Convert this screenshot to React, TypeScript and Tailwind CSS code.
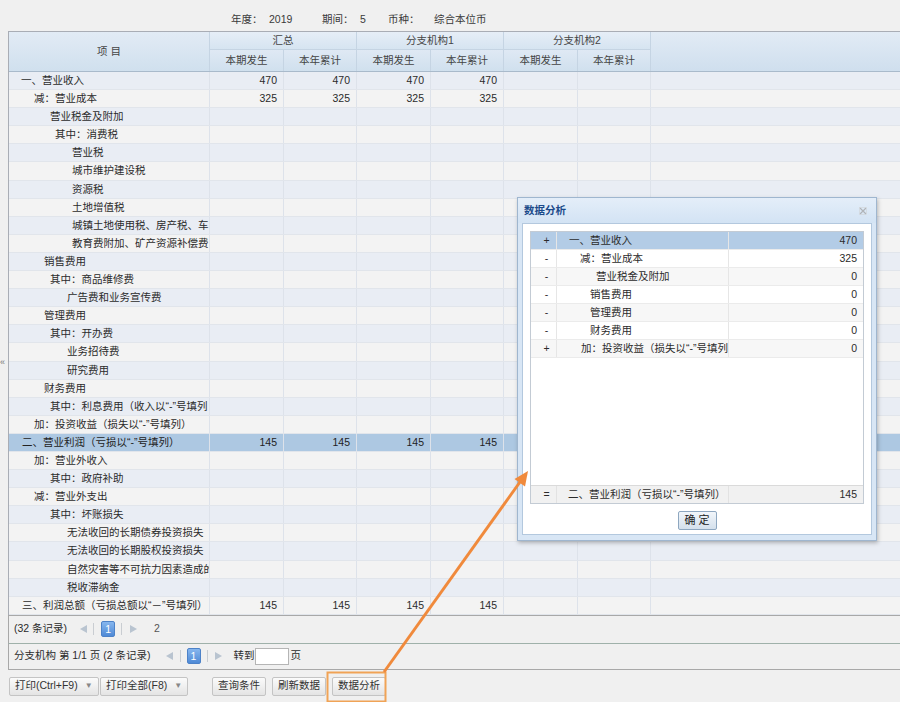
type Row = {
  name: string
  pad: string
  vals?: string[]
  sel?: boolean
}

const rows: Row[] = [
  { name: '一、营业收入', pad: 'pl-[12px]', vals: ['470', '470', '470', '470', '', ''] },
  { name: '减：营业成本', pad: 'pl-[25px]', vals: ['325', '325', '325', '325', '', ''] },
  { name: '营业税金及附加', pad: 'pl-[41px]' },
  { name: '其中：消费税', pad: 'pl-[46px]' },
  { name: '营业税', pad: 'pl-[63px]' },
  { name: '城市维护建设税', pad: 'pl-[63px]' },
  { name: '资源税', pad: 'pl-[63px]' },
  { name: '土地增值税', pad: 'pl-[63px]' },
  { name: '城镇土地使用税、房产税、车', pad: 'pl-[63px]' },
  { name: '教育费附加、矿产资源补偿费', pad: 'pl-[63px]' },
  { name: '销售费用', pad: 'pl-[35px]' },
  { name: '其中：商品维修费', pad: 'pl-[41px]' },
  { name: '广告费和业务宣传费', pad: 'pl-[58px]' },
  { name: '管理费用', pad: 'pl-[35px]' },
  { name: '其中：开办费', pad: 'pl-[41px]' },
  { name: '业务招待费', pad: 'pl-[58px]' },
  { name: '研究费用', pad: 'pl-[58px]' },
  { name: '财务费用', pad: 'pl-[35px]' },
  { name: '其中：利息费用（收入以“-”号填列', pad: 'pl-[41px]' },
  { name: '加：投资收益（损失以“-”号填列）', pad: 'pl-[25px]' },
  { name: '二、营业利润（亏损以“-”号填列）', pad: 'pl-[13px]', vals: ['145', '145', '145', '145', '', ''], sel: true },
  { name: '加：营业外收入', pad: 'pl-[25px]' },
  { name: '其中：政府补助', pad: 'pl-[41px]' },
  { name: '减：营业外支出', pad: 'pl-[25px]' },
  { name: '其中：坏账损失', pad: 'pl-[41px]' },
  { name: '无法收回的长期债券投资损失', pad: 'pl-[58px]' },
  { name: '无法收回的长期股权投资损失', pad: 'pl-[58px]' },
  { name: '自然灾害等不可抗力因素造成的', pad: 'pl-[58px]' },
  { name: '税收滞纳金', pad: 'pl-[58px]' },
  { name: '三、利润总额（亏损总额以“－”号填列）', pad: 'pl-[13px]', vals: ['145', '145', '145', '145', '', ''] },
]

const dlgRows = [
  { sign: '+', name: '一、营业收入', pad: 'pl-[12px]', val: '470' },
  { sign: '-', name: '减：营业成本', pad: 'pl-[23px]', val: '325' },
  { sign: '-', name: '营业税金及附加', pad: 'pl-[39px]', val: '0' },
  { sign: '-', name: '销售费用', pad: 'pl-[33px]', val: '0' },
  { sign: '-', name: '管理费用', pad: 'pl-[33px]', val: '0' },
  { sign: '-', name: '财务费用', pad: 'pl-[33px]', val: '0' },
  { sign: '+', name: '加：投资收益（损失以“-”号填列', pad: 'pl-[24px]', val: '0' },
]

const cols = 'grid grid-cols-[201px_74px_73px_74px_73px_74px_73px_1fr]'

function Prev() {
  return (
    <svg width="7" height="8" viewBox="0 0 7 8">
      <polygon points="7,0 7,8 0,4" fill="#b9c4d0" />
    </svg>
  )
}

function Next() {
  return (
    <svg width="7" height="8" viewBox="0 0 7 8">
      <polygon points="0,0 7,4 0,8" fill="#b9c4d0" />
    </svg>
  )
}

function Sep() {
  return <span className="w-px h-[12px] bg-[#c9cdd2]" />
}

function PageBox() {
  return (
    <span className="w-[14px] h-[16px] rounded-[2px] border border-[#4d82c8] bg-gradient-to-b from-[#86b6ee] to-[#4f8ad6] text-white text-center leading-[14px]">
      1
    </span>
  )
}

function Btn({ label, drop }: { label: string; drop?: boolean }) {
  return (
    <div className="h-[19px] px-[5px] flex items-center rounded-[2px] border border-[#c4c4c4] bg-gradient-to-b from-[#fbfbfb] to-[#e4e4e4] text-[#333] whitespace-nowrap">
      <span>{label}</span>
      {drop && <span className="ml-[7px] text-[8px] text-[#888]">▼</span>}
    </div>
  )
}

export default function App() {
  return (
    <div className="relative w-[900px] h-[702px] overflow-hidden bg-[#f0f0f0] text-[#2b2b2b] text-[10.5px] font-['Liberation_Sans','Noto_Sans_CJK_SC',sans-serif]">
      {/* query info */}
      <div className="h-[31px] pt-[8px] flex items-center text-[#3a3a3a]">
        <span className="ml-[231px] w-[38px]">年度：</span>
        <span className="w-[53px]">2019</span>
        <span className="w-[38px]">期间：</span>
        <span className="w-[28px]">5</span>
        <span className="w-[46px]">币种：</span>
        <span>综合本位币</span>
      </div>

      {/* report grid */}
      <div className="ml-[8px] border-l border-t border-[#a9adb5]">
        <div className={`${cols} grid-rows-[18px_21px] border-b border-[#a9bacb] text-[#444]`}>
          <div className="row-span-2 flex items-center justify-center border-r border-[#c5d4e3] bg-gradient-to-b from-[#e2ebf5] to-[#d0e0ee]">
            项 目
          </div>
          <div className="col-span-2 flex items-center justify-center border-r border-b border-[#c5d4e3] bg-gradient-to-b from-[#e6eef7] to-[#d6e4f1]">
            汇总
          </div>
          <div className="col-span-2 flex items-center justify-center border-r border-b border-[#c5d4e3] bg-gradient-to-b from-[#e6eef7] to-[#d6e4f1]">
            分支机构1
          </div>
          <div className="col-span-2 flex items-center justify-center border-r border-b border-[#c5d4e3] bg-gradient-to-b from-[#e6eef7] to-[#d6e4f1]">
            分支机构2
          </div>
          <div className="row-span-2 bg-gradient-to-b from-[#e2ebf5] to-[#cfdfee]" />
          {['本期发生', '本年累计', '本期发生', '本年累计', '本期发生', '本年累计'].map((t, i) => (
            <div
              key={i}
              className="flex items-center justify-center border-r border-[#c5d4e3] bg-gradient-to-b from-[#dfe9f4] to-[#d0e0ee]"
            >
              {t}
            </div>
          ))}
        </div>

        {rows.map((r, i) => {
          const bg = r.sel ? 'bg-[#adc8e2] text-[#222]' : i % 2 === 0 ? 'bg-[#e9edf4]' : 'bg-[#f3f3f3]'
          const vals = r.vals ?? ['', '', '', '', '', '']
          return (
            <div key={i} className={`${cols} h-[18.1px] border-b border-[#e1e5eb] leading-[17px] ${bg}`}>
              <div className={`${r.pad} border-r border-[#dde2ea] overflow-hidden whitespace-nowrap`}>{r.name}</div>
              {vals.map((v, j) => (
                <div key={j} className="border-r border-[#dde2ea] text-right pr-[6px]">
                  {v}
                </div>
              ))}
              <div />
            </div>
          )
        })}
      </div>

      {/* pager 1 */}
      <div className="ml-[8px] h-[28px] border-l border-t border-[#a8a8a8] flex items-center pl-[5px]">
        <span>(32 条记录)</span>
        <span className="ml-[13px]"><Prev /></span>
        <span className="ml-[6px] flex"><Sep /></span>
        <span className="ml-[7px] flex"><PageBox /></span>
        <span className="ml-[6px] flex"><Sep /></span>
        <span className="ml-[8px]"><Next /></span>
        <span className="ml-[17px] text-[#555]">2</span>
      </div>

      {/* pager 2 */}
      <div className="ml-[8px] h-[27px] border-l border-t border-b border-t-[#9fb1aa] border-b-[#a8a8a8] border-l-[#a8a8a8] flex items-center pl-[5px]">
        <span className="whitespace-nowrap">分支机构 第 1/1 页 (2 条记录)</span>
        <span className="ml-[15px]"><Prev /></span>
        <span className="ml-[7px] flex"><Sep /></span>
        <span className="ml-[6px] flex"><PageBox /></span>
        <span className="ml-[6px] flex"><Sep /></span>
        <span className="ml-[7px]"><Next /></span>
        <span className="ml-[12px]">转到</span>
        <span className="w-[34px] h-[17px] bg-white border border-[#b5b5b5]" />
        <span className="ml-[2px]">页</span>
      </div>

      {/* toolbar */}
      <div className="pt-[7px] pl-[9px] flex items-center">
        <div className="w-[86px] flex"><Btn label="打印(Ctrl+F9)" drop /></div>
        <div className="ml-[5px] w-[85px] flex"><Btn label="打印全部(F8)" drop /></div>
        <div className="ml-[27px]"><Btn label="查询条件" /></div>
        <div className="ml-[6px]"><Btn label="刷新数据" /></div>
        <div className="ml-[6px]"><Btn label="数据分析" /></div>
      </div>

      {/* collapse mark */}
      <span className="absolute left-[0px] top-[356px] text-[9px] text-[#777]">«</span>

      {/* analysis dialog */}
      <div className="absolute left-[517px] top-[197px] w-[360px] h-[344px] border border-[#9fb6cf] bg-[#d8e6f5] shadow-[1px_2px_4px_rgba(0,0,0,0.25)] flex flex-col">
        <div className="h-[25px] flex items-center justify-between px-[6px] bg-gradient-to-b from-[#e4eef9] to-[#d3e3f4]">
          <span className="font-bold text-[#1b4a8a]">数据分析</span>
          <svg width="8" height="8" viewBox="0 0 8 8" className="mr-[3px]">
            <path d="M1 1 L7 7 M7 1 L1 7" stroke="#b0b4b8" strokeWidth="1.2" />
            <rect x="0.5" y="0.5" width="7" height="7" fill="none" stroke="#d0d4d8" strokeWidth="0.6" />
          </svg>
        </div>
        <div className="mx-[4px] mb-[5px] flex-1 bg-white border border-[#b3c8de] px-[7px] pt-[7px] flex flex-col">
          <div className="h-[273px] border border-[#c3cbd4] flex flex-col">
            {dlgRows.map((r, i) => {
              const bg = i === 0 ? 'bg-[#b3cce6]' : i % 2 === 0 ? 'bg-[#f7f7f7]' : 'bg-white'
              return (
                <div
                  key={i}
                  className={`grid grid-cols-[26px_172px_1fr] h-[18px] leading-[17px] border-b border-[#ebebeb] ${bg}`}
                >
                  <div className="text-center pl-[6px] border-r border-[#e6e6e6]">{r.sign}</div>
                  <div className={`${r.pad} border-r border-[#e6e6e6] overflow-hidden whitespace-nowrap`}>{r.name}</div>
                  <div className="text-right pr-[6px]">{r.val}</div>
                </div>
              )
            })}
            <div className="flex-1" />
            <div className="grid grid-cols-[26px_172px_1fr] h-[18px] leading-[17px] border-t border-[#dadada] bg-[#f1f1f1]">
              <div className="text-center pl-[6px] border-r border-[#e2e2e2]">=</div>
              <div className="pl-[11px] border-r border-[#e2e2e2] overflow-hidden whitespace-nowrap">二、营业利润（亏损以“-”号填列）</div>
              <div className="text-right pr-[6px]">145</div>
            </div>
          </div>
          <div className="mt-[7px] flex justify-center">
            <div className="w-[39px] h-[19px] rounded-[2px] border border-[#8ea7c0] bg-gradient-to-b from-[#f2f6fa] to-[#d4e0ec] text-[#222] text-[11px] text-center leading-[17px]">
              确 定
            </div>
          </div>
        </div>
      </div>

      {/* annotation */}
      <svg className="absolute left-0 top-0 pointer-events-none" width="900" height="702">
        <rect x="327.5" y="672.5" width="58" height="29" fill="none" stroke="#f0a356" strokeWidth="2" />
        <line x1="384" y1="672" x2="520" y2="482" stroke="#f08a3c" strokeWidth="3" />
        <polygon points="528,471 525,486.5 514.5,479" fill="#f08a3c" />
      </svg>
    </div>
  )
}
